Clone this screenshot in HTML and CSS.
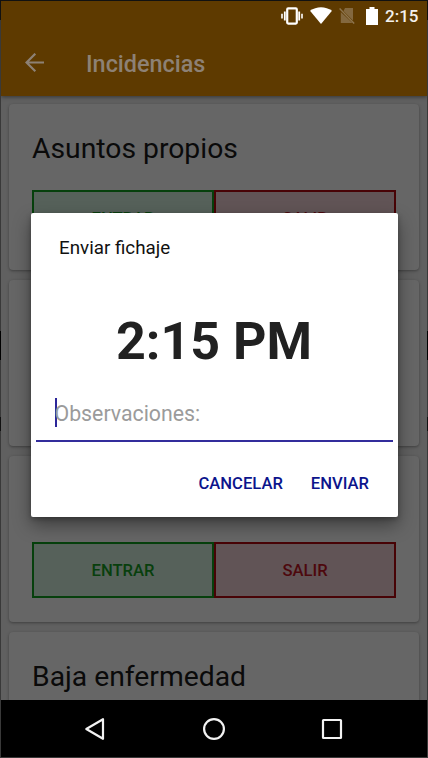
FILE: index.html
```html
<!DOCTYPE html>
<html lang="es">
<head>
<meta charset="utf-8">
<title>Incidencias</title>
<link rel="stylesheet" href="styles.css">
</head>
<body>
<div class="phone">
  <header class="top">
    <div class="status">
      <svg width="22" height="18" viewBox="0 0 22 18" fill="none" stroke="#fff"><rect x="6.200" y="1.400" width="9.600" height="15.200" rx="1" stroke-width="2.200"/><path d="M3.800 4.500v9M18.200 4.500v9" stroke-width="1.800"/><path d="M1 6.800v4.800M21 6.800v4.800" stroke-width="1.600"/></svg>
      <svg class="wifi" width="22" height="17" viewBox="0 0 22 17"><path d="M0 3.800C6.500-1 15.500-1 22 3.800L11 17z" fill="#fff"/></svg>
      <svg class="sim" width="16" height="17" viewBox="0 0 16 17"><path d="M6 1h8v12.500L4.500 4zM1.800 5v11h11.700z" fill="#83683f"/><path d="M.6 1.600l14.600 15" stroke="#8d744d" stroke-width="1.400"/></svg>
      <svg class="battery" width="12" height="18" viewBox="0 0 12 18"><path d="M3.500 0h5v2H12v16H0V2h3.500z" fill="#fff"/></svg>
      <span class="clock">2:15</span>
    </div>
    <div class="bar">
      <svg width="20" height="20" viewBox="0 0 20 20" fill="none" stroke="#8d8175" stroke-width="2.200"><path d="M19 9.500H2M10.300 .7L1.500 9.500l8.800 8.800"/></svg>
      <h1>Incidencias</h1>
    </div>
  </header>
  <main class="list">
    <section class="card"><h2>Asuntos propios</h2><div class="actions"><span class="in">ENTRAR</span><span class="out">SALIR</span></div></section>
    <section class="card"></section>
    <section class="card"><h2></h2><div class="actions"><span class="in">ENTRAR</span><span class="out">SALIR</span></div></section>
    <section class="card"><h2>Baja enfermedad</h2></section>
  </main>
  <nav class="nav">
    <svg width="22" height="24" viewBox="0 0 22 24"><path d="M2.300 12L19 2.200v19.600z"/></svg>
    <svg width="24" height="24" viewBox="0 0 24 24"><circle cx="12" cy="12" r="9.900"/></svg>
    <svg width="22" height="24" viewBox="0 0 22 24"><rect x="2" y="3" width="18" height="18" rx=".5"/></svg>
  </nav>
</div>
<div class="dialog">
  <div class="title">Enviar fichaje</div>
  <div class="time">2:15 PM</div>
  <div class="field"><i class="caret"></i><span>Observaciones:</span></div>
  <div class="buttons"><span class="cancel">CANCELAR</span><span class="send">ENVIAR</span></div>
</div>
</body>
</html>
```
FILE: styles.css
```css
* { box-sizing: border-box; }
body {
  margin: 0;
  width: 428px;
  height: 758px;
  padding: 1px;
  overflow: hidden;
  position: relative;
  font-family: Roboto, sans-serif;
  background: linear-gradient(#111 0 20px, #393939 20px 331px, #000 331px 360px, #393939 360px 417px, #111 417px 431px, #393939 431px);
}
svg { display: block; flex: none; }
.phone {
  height: 756px;
  display: flex;
  flex-direction: column;
  background: #606060;
  overflow: hidden;
}
.top {
  flex: none;
  height: 95px;
  background: #5e3a00;
  box-shadow: 0 1px 4px rgba(0, 0, 0, .45);
  position: relative;
}
.status {
  height: 29px;
  display: flex;
  justify-content: flex-end;
  align-items: center;
  padding-right: 8px;
}
.wifi { margin-left: 7px; }
.sim { margin-left: 7px; }
.battery { margin-left: 11px; }
.clock {
  width: 34px;
  margin-left: 7px;
  color: #f4f1ed;
  font-size: 17px;
  font-weight: 500;
  white-space: nowrap;
}
.bar {
  height: 66px;
  display: flex;
  align-items: center;
  padding-left: 24px;
}
.bar h1 {
  margin: 1px 0 0 41px;
  color: #8d8175;
  font-size: 23.400px;
  font-weight: 500;
}
.list {
  flex: 1;
  min-height: 0;
  overflow: hidden;
  padding: 8px 8px 0 8px;
  display: flex;
  flex-direction: column;
  gap: 10px;
}
.card {
  flex: none;
  height: 166px;
  padding: 24px 23px 0;
  border-radius: 4px;
  background: #666;
  box-shadow: 0 1px 3px rgba(0, 0, 0, .35);
}
.card h2 {
  margin: 0;
  height: 62px;
  color: #0a0a0a;
  font-size: 28.300px;
  line-height: 41px;
  font-weight: 400;
}
.actions { display: flex; height: 56px; }
.actions span {
  flex: 1;
  display: flex;
  align-items: center;
  justify-content: center;
  border: 2px solid;
  font-size: 16.600px;
  font-weight: 500;
}
.actions .in { color: #083f0d; background: #56615a; border-color: #06400c; }
.actions .out { color: #4d080d; background: #615456; border-color: #480306; }
.nav {
  flex: none;
  height: 57px;
  background: #000;
  display: flex;
  align-items: center;
  justify-content: space-between;
  padding: 0 84px 0 83px;
}
.nav svg { fill: none; stroke: #f2f2f2; stroke-width: 2.200; stroke-linejoin: round; }
.dialog {
  position: absolute;
  left: 30.500px;
  top: 213px;
  width: 367px;
  height: 303.500px;
  border-radius: 2px;
  background: #fff;
  box-shadow: 0 8px 18px rgba(0, 0, 0, .4), 0 2px 5px rgba(0, 0, 0, .25);
}
.title {
  padding: 24px 0 0 28.500px;
  font-size: 18.800px;
  line-height: 22px;
  color: #111;
}
.time {
  margin-top: 52px;
  text-align: center;
  font-size: 52px;
  line-height: 62px;
  font-weight: 700;
  color: #212121;
}
.field {
  height: 44px;
  margin: 25px 5px 0;
  padding-left: 19px;
  display: flex;
  border-bottom: 2px solid #332d9c;
  color: #9b9b9b;
  font-size: 21.300px;
  line-height: 31px;
}
.caret { width: 2px; height: 29px; margin-right: -2px; background: #2c2699; }
.buttons {
  margin-top: 30px;
  padding-right: 28.500px;
  display: flex;
  justify-content: flex-end;
  gap: 28px;
  color: #0c148c;
  font-size: 16.600px;
  line-height: 24px;
  font-weight: 500;
}
```
